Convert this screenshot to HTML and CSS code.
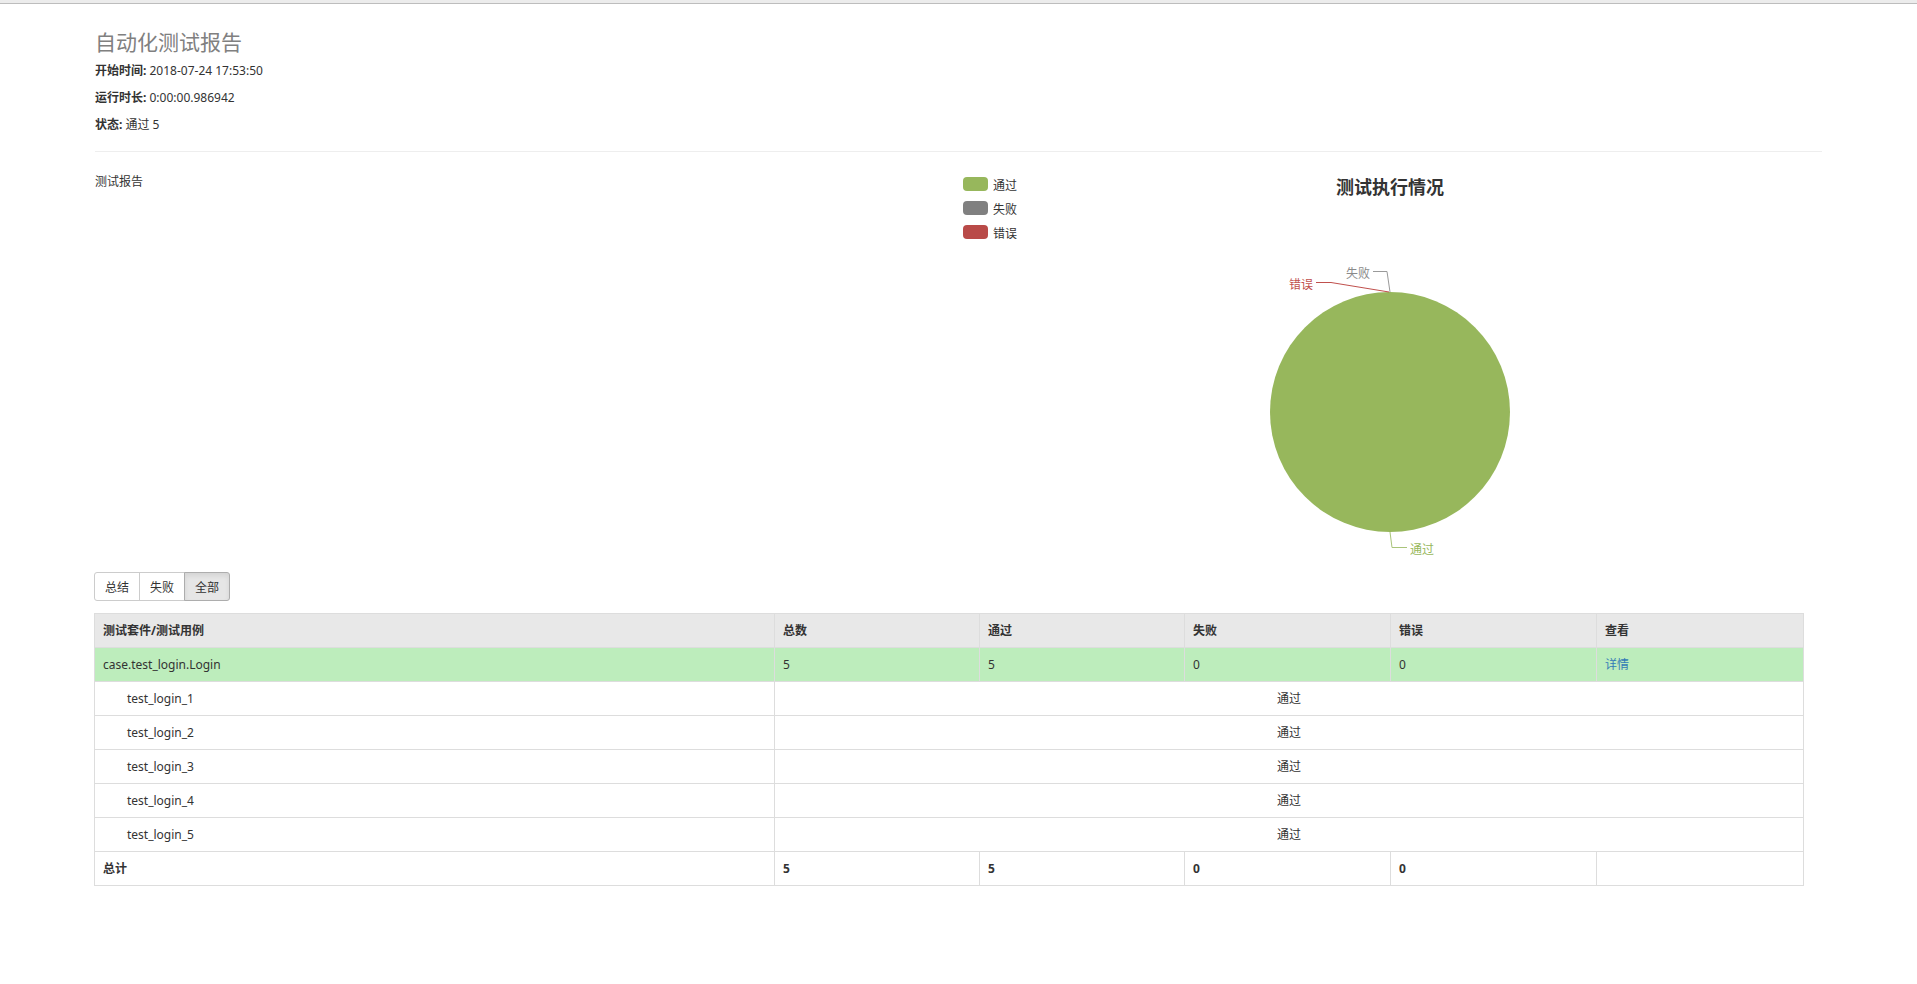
FILE: index.html
```html
<!DOCTYPE html>
<html lang="zh-CN">
<head>
<meta charset="utf-8">
<title>自动化测试报告</title>
<link rel="stylesheet" href="styles.css">
</head>
<body>
<div class="topbar"></div>
<div class="container">
  <div class="heading">
    <h1 class="title">自动化测试报告</h1>
    <p class="attribute"><strong>开始时间:</strong> 2018-07-24 17:53:50</p>
    <p class="attribute"><strong>运行时长:</strong> 0:00:00.986942</p>
    <p class="attribute"><strong>状态:</strong> 通过 5</p>
  </div>
  <hr class="divider">
  <div class="chart-row">
    <div class="col-half">
      <p class="desc">测试报告</p>
    </div>
    <div class="col-half">
      <svg class="chart" width="864" height="400" viewBox="0 0 864 400" xmlns="http://www.w3.org/2000/svg">
        <rect x="5" y="5" width="25" height="14" rx="4" fill="#97b75c"/>
        <text x="35" y="12" class="legend-text">通过</text>
        <rect x="5" y="29" width="25" height="14" rx="4" fill="#808080"/>
        <text x="35" y="36" class="legend-text">失败</text>
        <rect x="5" y="53" width="25" height="14" rx="4" fill="#b94a48"/>
        <text x="35" y="60" class="legend-text">错误</text>

        <text x="432" y="14" class="chart-title" text-anchor="middle">测试执行情况</text>

        <circle cx="432" cy="240" r="120" fill="#97b75c"/>

        <polyline points="415,99.5 429,99.5 432,120" fill="none" stroke="#9a9a9a" stroke-width="1"/>
        <text x="412" y="100" class="label-fail" text-anchor="end">失败</text>

        <polyline points="358,110.5 373,110.5 431,120" fill="none" stroke="#c0504d" stroke-width="1"/>
        <text x="355" y="111" class="label-error" text-anchor="end">错误</text>

        <polyline points="432,360 434,375.5 449,375.5" fill="none" stroke="#a9c47a" stroke-width="1"/>
        <text x="452" y="376" class="label-pass">通过</text>
      </svg>
    </div>
  </div>

  <div class="btn-group">
    <button class="btn">总结</button>
    <button class="btn">失败</button>
    <button class="btn active">全部</button>
  </div>

  <table class="result-table">
    <colgroup>
      <col class="c-name">
      <col class="c-205">
      <col class="c-205">
      <col class="c-206">
      <col class="c-206">
      <col class="c-207">
    </colgroup>
    <tr class="header-row">
      <td>测试套件/测试用例</td>
      <td>总数</td>
      <td>通过</td>
      <td>失败</td>
      <td>错误</td>
      <td>查看</td>
    </tr>
    <tr class="pass-row">
      <td>case.test_login.Login</td>
      <td>5</td>
      <td>5</td>
      <td>0</td>
      <td>0</td>
      <td><a class="detail" href="#">详情</a></td>
    </tr>
    <tr class="case-row">
      <td><div class="testcase">test_login_1</div></td>
      <td colspan="5" class="status">通过</td>
    </tr>
    <tr class="case-row">
      <td><div class="testcase">test_login_2</div></td>
      <td colspan="5" class="status">通过</td>
    </tr>
    <tr class="case-row">
      <td><div class="testcase">test_login_3</div></td>
      <td colspan="5" class="status">通过</td>
    </tr>
    <tr class="case-row">
      <td><div class="testcase">test_login_4</div></td>
      <td colspan="5" class="status">通过</td>
    </tr>
    <tr class="case-row">
      <td><div class="testcase">test_login_5</div></td>
      <td colspan="5" class="status">通过</td>
    </tr>
    <tr class="total-row">
      <td>总计</td>
      <td>5</td>
      <td>5</td>
      <td>0</td>
      <td>0</td>
      <td></td>
    </tr>
  </table>
</div>
</body>
</html>
```

FILE: styles.css
```css
html, body {
  margin: 0;
  padding: 0;
  background: #fff;
}

body {
  font-family: "Noto Sans", "Noto Sans CJK SC", sans-serif;
  font-size: 12px;
  line-height: 17px;
  color: #333;
}

.topbar {
  height: 3px;
  background: #ececec;
  border-bottom: 1px solid #bdbdbd;
}

.container {
  margin: 0 95px 0 94px;
}

.title {
  margin: 22px 0 0 1px;
  font-family: "Noto Sans CJK SC", sans-serif;
  font-size: 21px;
  line-height: 30px;
  font-weight: normal;
  color: #808080;
}

.attribute {
  margin: 10px 0 0 1px;
  line-height: 17px;
}

.title + .attribute {
  margin-top: 6px;
}

.attribute strong {
  font-weight: bold;
}

.divider {
  margin: 18px 0 20px 1px;
  border: 0;
  border-top: 1px solid #eee;
  height: 0;
}

.chart-row {
  display: flex;
  height: 400px;
}

.col-half {
  flex: 1 1 0;
  min-width: 0;
}

.desc {
  margin: 1px 0 0 1px;
}

.chart {
  display: block;
  font-family: "Noto Sans CJK SC", sans-serif;
}

.legend-text {
  font-size: 12px;
  fill: #333;
  dominant-baseline: central;
}

.chart-title {
  font-size: 18px;
  font-weight: bold;
  fill: #333;
  dominant-baseline: central;
}

.label-fail {
  font-size: 12px;
  fill: #8a8a8a;
  dominant-baseline: central;
}

.label-error {
  font-size: 12px;
  fill: #c0504d;
  dominant-baseline: central;
}

.label-pass {
  font-size: 12px;
  fill: #97b75c;
  dominant-baseline: central;
}

.btn-group {
  display: flex;
  margin-bottom: 12px;
}

.btn {
  font-family: "Noto Sans CJK SC", sans-serif;
  font-size: 12px;
  line-height: 17px;
  color: #333;
  background: #fff;
  border: 1px solid #ccc;
  padding: 5px 10px;
  margin: 0 0 0 -1px;
  border-radius: 0;
  cursor: pointer;
}

.btn:first-child {
  margin-left: 0;
  border-radius: 3px 0 0 3px;
}

.btn:last-child {
  border-radius: 0 3px 3px 0;
}

.btn.active {
  background: #e6e6e6;
  border-color: #adadad;
  box-shadow: inset 0 3px 5px rgba(0, 0, 0, 0.08);
}

.result-table {
  width: 1709px;
  table-layout: fixed;
  border-collapse: collapse;
  border-spacing: 0;
}

.c-name {
  width: 680px;
}

.c-205 {
  width: 205px;
}

.c-206 {
  width: 206px;
}

.c-207 {
  width: 207px;
}

.result-table td {
  border: 1px solid #ddd;
  padding: 8px;
  line-height: 17px;
  vertical-align: top;
  text-align: left;
}

.header-row td {
  background: #e8e8e8;
  font-weight: bold;
}

.pass-row td {
  background: #bdedbc;
}

.detail {
  color: #337ab7;
  text-decoration: none;
}

.testcase {
  margin-left: 24px;
}

.result-table td.status {
  text-align: center;
}

.total-row td {
  font-weight: bold;
}
```
